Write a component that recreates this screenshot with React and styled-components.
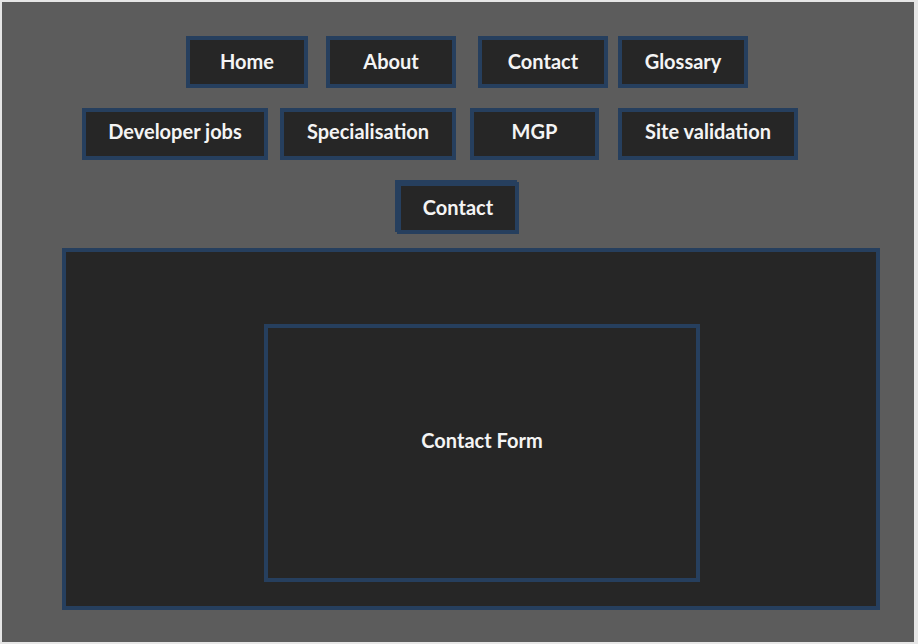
import React from 'react'
import styled, { createGlobalStyle } from 'styled-components'

const Global = createGlobalStyle`
  html, body {
    margin: 0;
    padding: 0;
    background: #e6e6e6;
  }
  body {
    font-family: "Lato", "Liberation Sans", sans-serif;
  }
`;

const Canvas = styled.div`
  margin: 2px;
  width: 912px;
  height: 640px;
  background: #5c5c5c;
  padding-top: 34px;
  box-sizing: border-box;
  display: flex;
  flex-direction: column;
`;

const NavRow = styled.nav`
  display: flex;
  justify-content: ${p => (p.centered ? 'center' : 'flex-start')};
  padding-left: ${p => p.offset || 0}px;
  margin-bottom: ${p => p.spacing || 20}px;
`;

const NavButton = styled.a`
  box-sizing: border-box;
  width: ${p => p.w}px;
  height: 52px;
  margin-left: ${p => p.gap || 0}px;
  background: #262626;
  border: 4px solid #263f5e;
  color: #f4f4f4;
  font-size: 20px;
  font-weight: 700;
  display: flex;
  align-items: center;
  justify-content: center;
  padding-bottom: ${p => p.lift || 3}px;
  text-decoration: none;
  cursor: pointer;

  &.active {
    box-shadow: -2px -2px 0 0 #263f5e;
  }
`;

const Panel = styled.main`
  box-sizing: border-box;
  width: 818px;
  height: 362px;
  margin-left: 60px;
  background: #262626;
  border: 4px solid #263f5e;
  padding: 72px 176px 24px 198px;
  display: flex;
`;

const FormBox = styled.section`
  box-sizing: border-box;
  flex: 1;
  border: 4px solid #263f5e;
  display: flex;
  align-items: center;
  justify-content: center;
  padding-bottom: 26px;
  color: #f4f4f4;
  font-size: 20px;
  font-weight: 700;
`;

const topLinks = [
  { label: 'Home', w: 122, gap: 0 },
  { label: 'About', w: 130, gap: 18 },
  { label: 'Contact', w: 130, gap: 22 },
  { label: 'Glossary', w: 130, gap: 10 },
];

const subLinks = [
  { label: 'Developer jobs', w: 186, gap: 0 },
  { label: 'Specialisation', w: 176, gap: 12 },
  { label: 'MGP', w: 129, gap: 14 },
  { label: 'Site validation', w: 180, gap: 19 },
];

const App = () => {
  return (
    <>
      <Global />
      <Canvas>
        <NavRow offset={184}>
          {topLinks.map(l => (
            <NavButton key={l.label} w={l.w} gap={l.gap}>{l.label}</NavButton>
          ))}
        </NavRow>
        <NavRow offset={80} spacing={22}>
          {subLinks.map(l => (
            <NavButton key={l.label} w={l.w} gap={l.gap} lift={6}>{l.label}</NavButton>
          ))}
        </NavRow>
        <NavRow centered spacing={14}>
          <NavButton className="active" w={122}>Contact</NavButton>
        </NavRow>
        <Panel>
          <FormBox>Contact Form</FormBox>
        </Panel>
      </Canvas>
    </>
  )
}

export default App
